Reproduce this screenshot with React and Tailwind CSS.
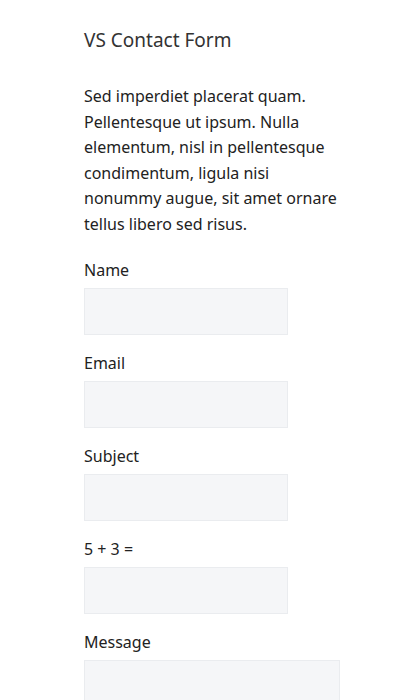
import React from "react";

const fields = [
  { id: "name", label: "Name" },
  { id: "email", label: "Email" },
  { id: "subject", label: "Subject" },
  { id: "sum", label: "5 + 3 =" },
];

export default function App() {
  return (
    <div
      className="min-h-screen bg-white pl-[84px] pr-[60px] pt-[28px] text-[#222]"
      style={{ fontFamily: "'Noto Sans', 'Open Sans', sans-serif" }}
    >
      <h2 className="text-[19px] leading-[24px] text-[#333]">VS Contact Form</h2>
      <p className="mt-[32px] text-[16px] leading-[25.6px]">
        Sed imperdiet placerat quam. Pellentesque ut ipsum. Nulla elementum, nisl in pellentesque
        condimentum, ligula nisi nonummy augue, sit amet ornare tellus libero sed risus.
      </p>
      <form className="mt-[20px] flex flex-col gap-4" onSubmit={(e) => e.preventDefault()}>
        {fields.map((f) => (
          <div key={f.id} className="flex flex-col gap-[6px]">
            <label htmlFor={f.id} className="text-[16px] leading-[24px]">
              {f.label}
            </label>
            <input
              id={f.id}
              type="text"
              className="h-[47px] w-[204px] border border-[#eaecef] bg-[#f5f6f8] px-3 outline-none"
            />
          </div>
        ))}
        <div className="flex flex-col gap-[6px]">
          <label htmlFor="message" className="text-[16px] leading-[24px]">
            Message
          </label>
          <textarea
            id="message"
            className="h-[120px] w-[256px] resize-none border border-[#eaecef] bg-[#f5f6f8] px-3 outline-none"
          />
        </div>
      </form>
    </div>
  );
}
